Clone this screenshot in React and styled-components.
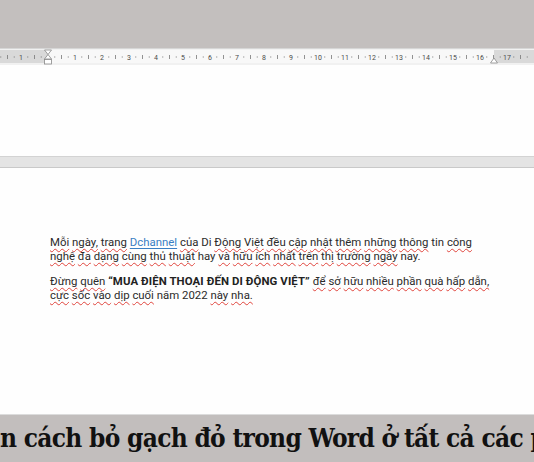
import React from "react"
import styled, { createGlobalStyle } from "styled-components"

const Global = createGlobalStyle`
  html, body { margin: 0; padding: 0; background: #fff; }
  body { width: 534px; height: 462px; overflow: hidden; }
`

const Screen = styled.div`
  width: 534px;
  height: 462px;
  display: flex;
  flex-direction: column;
  overflow: hidden;
`

const Backdrop = styled.div`
  height: 48px;
  background: #c3bfbe;
`

const RulerBar = styled.div`
  height: 17px;
  background: #f1f1f1;
  border-top: 1px solid #d6d6d6;
  box-sizing: border-box;
`

const Sheet = styled.div`
  background: #fefefe;
  height: ${(p) => p.$h}px;
  box-sizing: border-box;
  padding: ${(p) => p.$pad || "0"};
`

const PageGap = styled.div`
  height: 12px;
  box-sizing: border-box;
  background: #e4e4e4;
  border-top: 1px solid #d3d3d3;
  border-bottom: 1px solid #c9c9c9;
`

const Para = styled.p`
  margin: 0 0 11px;
  width: 450px;
  font-family: Roboto, "Noto Sans", sans-serif;
  font-size: 11.4px;
  line-height: 14px;
  color: #2b2b2b;
`

const W = styled.span`
  text-decoration: underline wavy #e0443c;
  text-decoration-thickness: 1px;
  text-underline-offset: 2px;
`

const LinkWord = styled.span`
  color: #3a7fc4;
  text-decoration: underline;
  text-decoration-color: #3a7fc4;
  text-underline-offset: 2px;
`

const Strong = styled.b`
  font-weight: 700;
  color: #222;
  letter-spacing: 0.1px;
`

const Caption = styled.div`
  height: 48px;
  background: #c2bebd;
  border-top: 1px solid #dcdcdc;
  box-sizing: border-box;
  white-space: nowrap;
  overflow: hidden;
  font-family: "DejaVu Serif Condensed", "DejaVu Serif", serif;
  font-stretch: condensed;
  font-weight: 700;
  font-size: 26px;
  line-height: 46px;
  color: #111;
  letter-spacing: -0.7px;
`

const Ruler = () => {
  const unit = 27
  const zero = 48
  const marks = []
  for (let n = -2; n <= 18; n++) {
    const base = zero + n * unit
    const label = Math.abs(n)
    if (n !== 0 && label <= 17 && base > 6) {
      marks.push(
        <text key={"t" + n} x={base} y={10.5} fontSize="7" textAnchor="middle"
          fontFamily="Roboto, sans-serif" fill="#4a4a4a">{label}</text>
      )
    }
    ;[0.25, 0.5, 0.75].forEach((f) => {
      const x = base + f * unit
      if (f === 0.5) {
        marks.push(<line key={"h" + n} x1={x} x2={x} y1={6} y2={10} stroke="#777" strokeWidth="0.8" />)
      } else {
        marks.push(<rect key={"d" + n + f} x={x - 0.5} y={7.5} width="1" height="1" fill="#777" />)
      }
    })
  }
  return (
    <RulerBar>
      <svg width="534" height="16" viewBox="0 0 534 16" style={{ display: "block" }}>
        <rect x="0" y="1" width="48" height="13" fill="#d9d9d9" />
        <rect x="48" y="1" width="446" height="13" fill="#f8f8f8" />
        <rect x="494" y="1" width="40" height="13" fill="#d9d9d9" />
        {marks}
        <path d="M44.5 1 L51.5 1 L48 5.5 Z" fill="#fff" stroke="#888" strokeWidth="0.8" />
        <path d="M48 5.5 L51.5 10 L44.5 10 Z" fill="#fff" stroke="#888" strokeWidth="0.8" />
        <rect x="44.5" y="10.5" width="7" height="4.5" fill="#fff" stroke="#888" strokeWidth="0.8" />
        <path d="M494 9 L497.5 14 L490.5 14 Z" fill="#fff" stroke="#888" strokeWidth="0.8" />
      </svg>
    </RulerBar>
  )
}

const u = (t) => <W>{t}</W>

export default function App() {
  return (
    <>
      <Global />
      <Screen>
        <Backdrop />
        <Ruler />
        <Sheet $h={91} />
        <PageGap />
        <Sheet $h={246} $pad="67px 0 0 50px">
          <Para>
            {u("Mỗi")} {u("ngày,")} {u("trang")} <LinkWord>Dchannel</LinkWord> {u("của")} Di {u("Động")}{" "}
            {u("Việt")} {u("đều")} {u("cập")} {u("nhật")} {u("thêm")} {u("những")} {u("thông")} tin {u("công")}
            <br />
            {u("nghệ")} {u("đa")} {u("dạng")} {u("cùng")} {u("thủ")} {u("thuật")} hay {u("và")} {u("hữu")}{" "}
            {u("ích")} {u("nhất")} {u("trên")} {u("thị")} {u("trường")} {u("ngày")} nay.
          </Para>
          <Para>
            {u("Đừng")} {u("quên")} <Strong>“MUA ĐIỆN THOẠI ĐẾN DI ĐỘNG VIỆT”</Strong> {u("để")} {u("sở")}{" "}
            {u("hữu")} {u("nhiều")} {u("phần")} {u("quà")} {u("hấp")} {u("dẫn,")}
            <br />
            {u("cực")} {u("sốc")} {u("vào")} {u("dịp")} {u("cuối")} năm 2022 {u("này")} {u("nha.")}
          </Para>
        </Sheet>
        <Caption>n cách bỏ gạch đỏ trong Word ở tất cả các phiên bản</Caption>
      </Screen>
    </>
  )
}
